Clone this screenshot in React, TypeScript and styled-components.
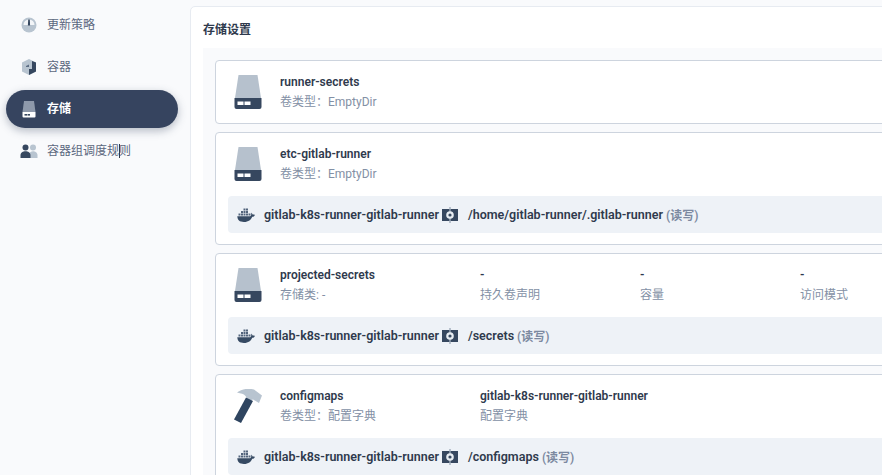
import React from "react";
import styled, { createGlobalStyle } from "styled-components";

const Global = createGlobalStyle`
  html, body { margin: 0; padding: 0; width: 882px; height: 475px; overflow: hidden; background: #f9fafc; }
  body { font-family: Roboto, "Noto Sans CJK SC", sans-serif; font-size: 12px; color: #2f3a4d; }
`;

const Page = styled.div`
  display: flex;
  align-items: flex-start;
  width: 882px;
  height: 475px;
  overflow: hidden;
  background: #f9fafc;
`;
const Sidebar = styled.nav`
  flex: 0 0 190px;
  display: flex;
  flex-direction: column;
  gap: 4px;
  padding: 6px 12px 0 6px;
  box-sizing: border-box;
`;
const NavItem = styled.div<{ $active?: boolean }>`
  position: relative;
  height: 38px;
  display: flex;
  align-items: center;
  gap: 9px;
  padding-left: 14px;
  border-radius: 19px;
  font-size: 12px;
  font-weight: ${(p) => (p.$active ? 600 : 400)};
  color: ${(p) => (p.$active ? "#ffffff" : "#5c6880")};
  background: ${(p) => (p.$active ? "#36445f" : "transparent")};
  box-shadow: ${(p) => (p.$active ? "0 3px 8px rgba(54,68,95,0.35)" : "none")};
`;
const NavIcon = styled.svg`
  flex: 0 0 18px;
  width: 18px;
  height: 18px;
`;
const NavLabel = styled.span`
  margin-bottom: 4px;
`;
const Caret = styled.span`
  position: absolute;
  left: 113px;
  top: 12px;
  width: 1px;
  height: 14px;
  background: #2f3a4d;
`;
const Main = styled.main`
  flex: 0 0 760px;
  margin-top: 6px;
  background: #fff;
  border: 1px solid #e7ebf1;
  border-radius: 5px 0 0 0;
  box-sizing: border-box;
  padding: 0 0 12px 12px;
`;
const Title = styled.h2`
  margin: 0;
  height: 41px;
  display: flex;
  align-items: center;
  padding-top: 1px;
  box-sizing: border-box;
  font-size: 12px;
  font-weight: 600;
  color: #2f3a4d;
`;
const Panel = styled.section`
  background: #f9fafc;
  padding: 12px 0 12px 12px;
  display: flex;
  flex-direction: column;
  gap: 8px;
`;
const Card = styled.article<{ $plain?: boolean }>`
  background: #fff;
  border: 1px solid #cdd4de;
  border-radius: 4px;
  padding: 10px 0 ${(p) => (p.$plain ? 10 : 11)}px 12px;
  box-sizing: border-box;
`;
const Head = styled.div`
  display: flex;
  align-items: center;
  height: 42px;
`;
const BigIcon = styled.svg`
  flex: 0 0 28px;
  width: 28px;
  height: 34px;
  margin: 0 18px 0 6px;
`;
const Col = styled.div<{ $w: number }>`
  flex: 0 0 ${(p) => p.$w}px;
  display: flex;
  flex-direction: column;
  gap: 4px;
  line-height: 16px;
`;
const Name = styled.div`
  font-weight: 600;
  color: #2f3a4d;
`;
const Sub = styled.div`
  color: #8390a5;
`;
const Mount = styled.div`
  display: flex;
  align-items: center;
  height: 37px;
  margin-top: 11px;
  padding-left: 9px;
  background: #eef2f7;
  border-radius: 4px 0 0 4px;
  font-size: 12.500px;
  font-weight: 600;
  color: #2f3a4d;
`;
const Whale = styled.svg`
  flex: 0 0 18px;
  width: 18px;
  height: 14px;
  margin-right: 9px;
`;
const Gear = styled.svg`
  flex: 0 0 16px;
  width: 16px;
  height: 16px;
  margin: 0 10px 0 3px;
`;
const Mode = styled.span`
  font-size: 12px;
  font-weight: 600;
  color: #7c89a0;
  margin-left: 3px;
`;

const Drive = () => (
  <BigIcon viewBox="0 0 28 34">
    <path d="M4.500 0h19l3.500 23H1z" fill="#b6c1cd" />
    <path d="M0.500 23h27v9a2 2 0 0 1-2 2h-23a2 2 0 0 1-2-2z" fill="#36475f" />
    <rect x="3.500" y="26.500" width="6" height="3.500" fill="#fff" />
    <rect x="10.500" y="26.500" width="6" height="3.500" fill="#fff" />
  </BigIcon>
);
const Hammer = () => (
  <BigIcon viewBox="0 0 28 34">
    <path d="M3 3.500C8-.5 15-.8 20 .500l8 6-3 7.500-6-3.500-3.500 1.500-4.500-5.500C10 5 7 4.500 3 3.500z" fill="#b8c4d0" />
    <path d="M12 8.500l7 3.500L7 34 0 30.500z" fill="#2f4560" />
  </BigIcon>
);
const WhaleIcon = () => (
  <Whale viewBox="0 0 18 14">
    <path d="M4 3h2v2H4zM6.500 3h2v2h-2zM9 3h2v2H9zM6.500.500h2v2h-2zM9 .500h2v2H9zM1.500 5.500h2v2h-2zM4 5.500h2v2H4zM6.500 5.500h2v2h-2zM9 5.500h2v2H9zM11.500 5.500h2v2h-2z" fill="#52647c" />
    <path d="M.300 8.300h12.200c.8 0 1.500-.4 1.700-1.300.2-1.200-.1-2.200-.1-2.200s1.200.5 1.500 1.700c.8-.2 1.700-.1 2.300.4-.5 1.300-1.500 1.800-2.700 1.800C14.200 11.500 11.500 14 7 14 2.500 14 .5 12 .300 8.300z" fill="#364a63" />
  </Whale>
);
const GearIcon = () => (
  <Gear viewBox="0 0 16 16">
    <rect x="0" y="2" width="16" height="12" fill="#36475f" />
    <rect x="7.300" y="0" width="1.400" height="16" fill="#9fabb9" />
    <circle cx="8" cy="8" r="3.800" fill="#e8edf2" />
    <circle cx="8" cy="8" r="1.600" fill="#36475f" />
  </Gear>
);
const Mounted = ({ path }: { path: string }) => (
  <Mount>
    <WhaleIcon />
    gitlab-k8s-runner-gitlab-runner
    <GearIcon />
    {path}
    <Mode>(读写)</Mode>
  </Mount>
);
const Field = ({ name, sub, w }: { name: string; sub: string; w: number }) => (
  <Col $w={w}>
    <Name>{name}</Name>
    <Sub>{sub}</Sub>
  </Col>
);

export default function App() {
  return (
    <Page>
      <Global />
      <Sidebar>
        <NavItem>
          <NavIcon viewBox="0 0 18 18">
            <circle cx="9" cy="9" r="7.500" fill="#b8c4d0" />
            <path d="M3.500 9a5.500 5.500 0 0 1 11 0z" fill="#f3f5f8" />
            <path d="M8.200 3.500h1.600l.3 6H7.900z" fill="#36475f" />
          </NavIcon>
          <NavLabel>更新策略</NavLabel>
        </NavItem>
        <NavItem>
          <NavIcon viewBox="0 0 18 18">
            <path d="M9 1l7 3.500v9L9 17l-7-3.500v-9z" fill="#b8c4d0" />
            <path d="M12 3l4 1.500v9L9 17v-6h3z" fill="#36475f" />
            <path d="M6 8l3-1.500V9H6z" fill="#5c6d84" />
          </NavIcon>
          <NavLabel>容器</NavLabel>
        </NavItem>
        <NavItem $active>
          <NavIcon viewBox="0 0 18 18">
            <path d="M4 1h10l1.500 11h-13z" fill="#8e99ab" />
            <path d="M2.500 12h13v4.500a1 1 0 0 1-1 1h-11a1 1 0 0 1-1-1z" fill="#fff" />
            <rect x="4.500" y="14" width="2.500" height="1.600" fill="#36475f" />
            <rect x="7.500" y="14" width="2.500" height="1.600" fill="#36475f" />
          </NavIcon>
          <NavLabel>存储</NavLabel>
        </NavItem>
        <NavItem>
          <NavIcon viewBox="0 0 18 18">
            <circle cx="13" cy="5.500" r="3" fill="#b8c4d0" />
            <path d="M9 16v-3c0-2.500 2-3.800 4-3.800s4.500 1.300 4.500 3.800v3z" fill="#b8c4d0" />
            <circle cx="5.500" cy="5.500" r="3" fill="#36475f" />
            <path d="M0.500 16v-3c0-2.500 2.500-3.800 5-3.800s5 1.300 5 3.800v3z" fill="#36475f" />
          </NavIcon>
          <NavLabel>容器组调度规则</NavLabel>
          <Caret />
        </NavItem>
      </Sidebar>
      <Main>
        <Title>存储设置</Title>
        <Panel>
          <Card $plain>
            <Head>
              <Drive />
              <Field name="runner-secrets" sub="卷类型：EmptyDir" w={200} />
            </Head>
          </Card>
          <Card>
            <Head>
              <Drive />
              <Field name="etc-gitlab-runner" sub="卷类型：EmptyDir" w={200} />
            </Head>
            <Mounted path="/home/gitlab-runner/.gitlab-runner" />
          </Card>
          <Card>
            <Head>
              <Drive />
              <Field name="projected-secrets" sub="存储类: -" w={200} />
              <Field name="-" sub="持久卷声明" w={160} />
              <Field name="-" sub="容量" w={160} />
              <Field name="-" sub="访问模式" w={100} />
            </Head>
            <Mounted path="/secrets" />
          </Card>
          <Card>
            <Head>
              <Hammer />
              <Field name="configmaps" sub="卷类型：配置字典" w={200} />
              <Field name="gitlab-k8s-runner-gitlab-runner" sub="配置字典" w={300} />
            </Head>
            <Mounted path="/configmaps" />
          </Card>
        </Panel>
      </Main>
    </Page>
  );
}
